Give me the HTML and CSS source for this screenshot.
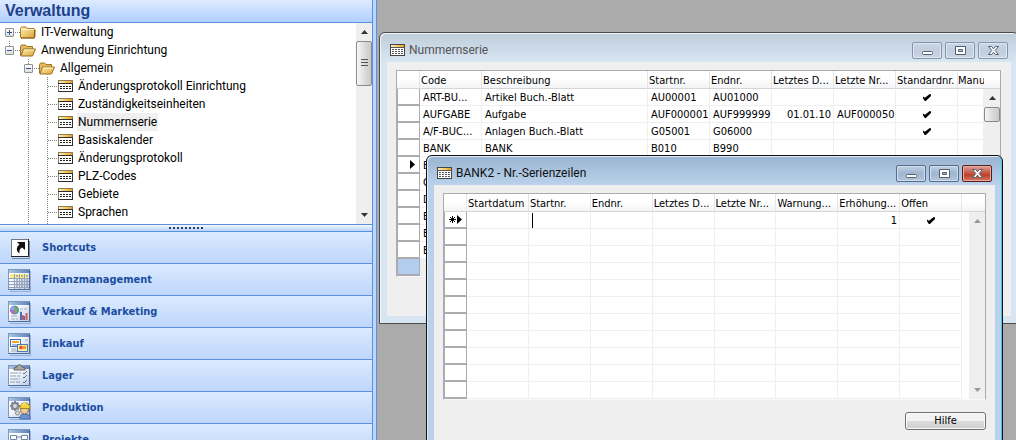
FILE: index.html
```html
<!DOCTYPE html>
<html lang="de">
<head>
<meta charset="utf-8">
<title>Verwaltung</title>
<link rel="stylesheet" href="styles.css">
</head>
<body>
<svg class="defs" aria-hidden="true">
  <defs>
    <linearGradient id="gFolder" x1="0" y1="0" x2="1" y2="1"><stop offset="0" stop-color="#fff0b0"/><stop offset="1" stop-color="#dca234"/></linearGradient>
    <linearGradient id="gOrange" x1="0" y1="0" x2="1" y2="0"><stop offset="0" stop-color="#fff0b8"/><stop offset="1" stop-color="#eda31f"/></linearGradient>
    <linearGradient id="gSheet" x1="0" y1="0" x2="1" y2="1"><stop offset="0.3" stop-color="#ffffff"/><stop offset="1" stop-color="#bccbe6"/></linearGradient>
    <linearGradient id="gCap" x1="0" y1="0" x2="1" y2="0"><stop offset="0" stop-color="#a9c4ea"/><stop offset="1" stop-color="#5f83bd"/></linearGradient>
    <symbol id="folder" viewBox="0 0 16 13"><path d="M.5 11V2.500L1.500 1h4.500l1.500 1.500h6.500l1 1V11l-1 1h-13z" fill="url(#gFolder)" stroke="#a87b28"/><path d="M1.500 3.500h12" stroke="#fff6cc"/><path d="M1 12h13.500V4" fill="none" stroke="#80601e"/></symbol>
    <symbol id="open" viewBox="0 0 16 13"><path d="M.5 11.500v-9L1.500 1h4L7 2.500h5.500v3" fill="#e5b95c" stroke="#a07526"/><path d="M3.500 5h12L12.500 12H1z" fill="url(#gFolder)" stroke="#94702a"/><path d="M4 6h10" stroke="#fff3bd"/></symbol>
    <symbol id="form" viewBox="0 0 15 12"><rect x=".5" y=".5" width="14" height="11" fill="#fff" stroke="#8a7d58"/><rect x="1" y="1" width="13" height="2" fill="url(#gOrange)"/><path d="M0 3.500h15M14.500 3v9M0 11.500h15" stroke="#303030"/><path d="M2 6.500h2m1 0h2m1 0h2m1 0h2M2 8.500h2m1 0h2m1 0h2m1 0h2" stroke="#222"/></symbol>
    <symbol id="formw" viewBox="0 0 15 12"><rect x=".5" y=".5" width="14" height="11" fill="#fff" stroke="#444"/><rect x="1" y="1" width="13" height="2" fill="url(#gOrange)"/><path d="M0 3.500h15" stroke="#555"/><path d="M2 5.500h2m1 0h2m1 0h2m1 0h2M2 7.500h2m1 0h2m1 0h2m1 0h2M2 9.500h2m1 0h2m1 0h2m1 0h2" stroke="#555"/></symbol>
    <symbol id="sheet" viewBox="0 0 24 24"><path d="M2 23.500h20.500V3" fill="none" stroke="#7d93b8" opacity=".6"/><rect x=".5" y="1.500" width="21" height="20" fill="url(#gSheet)" stroke="#8397b5"/><rect x="1" y="2" width="20" height="3" fill="url(#gCap)"/><path d="M21.500 2v19.500H1" fill="none" stroke="#526a91"/></symbol>
    <symbol id="shortcut" viewBox="0 0 24 24"><path d="M4 22.500h17.500V5" fill="none" stroke="#7888a5"/><rect x="3.500" y="3.500" width="17" height="17" fill="#fff" stroke="#777"/><path d="M20.500 3v17.500H3" fill="none" stroke="#222"/><path d="M9 6h8v8l-3-2.500c-2 1-3 3-2.500 6C8 15 8 11 11.500 8.500z" fill="#111"/></symbol>
    <symbol id="finance" viewBox="0 0 24 24"><use href="#sheet"/><rect x="2" y="6" width="18" height="4" fill="#f7eb8b"/><path d="M1 10.500h20M1 13.500h20M1 16.500h20M1 19.500h20M6.500 6v15M11.500 6v15M16.500 6v15" stroke="#93a3bd"/><path d="M8 8h2m3 0h2m3 0h2M8 12h2m3 0h2m3 0h2M8 15h2m3 0h2m3 0h2M8 18h2m3 0h2m3 0h2" stroke="#727b8b"/></symbol>
    <symbol id="sales" viewBox="0 0 24 24"><use href="#sheet"/><circle cx="6.500" cy="10" r="4" fill="#65b966" stroke="#5b72a4"/><path d="M6.500 10V6a4 4 0 0 0-4 4z" fill="#8fa0ee"/><path d="M6.500 10H2.500a4 4 0 0 0 4 4z" fill="#c261c4"/><path d="M12 9h3m1 0h3M12 12h2M3 16h6M3 19h4m1 0h2" stroke="#a1adbf"/><path d="M13 20v-8m3 8v-4" stroke="#3f6fce" stroke-width="2"/><path d="M14.500 20v-5m4 5v-7" stroke="#dc5948" stroke-width="2"/></symbol>
    <symbol id="purchase" viewBox="0 0 24 24"><use href="#sheet"/><path d="M3 17h5M3 19h6m8-11h3" stroke="#a1adbf"/><rect x="2.500" y="7.500" width="10" height="7" fill="#fff" stroke="#3f70be"/><path d="M4 10h7" stroke="#f2a528" stroke-width="2"/><path d="M4 13h7" stroke="#4b78c4"/><rect x="9.500" y="12.500" width="10" height="7" fill="#fff4b5" stroke="#547ab4"/><circle cx="13" cy="15.500" r="2" fill="#e85c2b"/><circle cx="16.500" cy="15.500" r="2" fill="#f4a32b"/></symbol>
    <symbol id="stock" viewBox="0 0 24 24"><use href="#sheet"/><path d="M6 6V4l3-1c0-3 5-3 5 0l3 1v2z" fill="#aaa7a0" stroke="#69665f"/><path d="M2 9h8m1 0h2M2 12h6m1 0h3M2 15h8m1 0h1M2 18h5m1 0h4" stroke="#8a99b1"/><path d="M15 9l1 1 3-3M15 13l1 1 3-3M15 18l1 1 3-3" fill="none" stroke="#5e708e"/></symbol>
    <symbol id="production" viewBox="0 0 24 24"><use href="#sheet"/><circle cx="7" cy="10" r="3" fill="#d7dbe0" stroke="#7f8791" stroke-width="2"/><path d="M7 5v2m0 6v2M2 10h2m6 0h2M3.500 6.500L5 8m4 4l1.500 1.500M10.500 6.500L9 8m-4 4l-1.500 1.500" stroke="#7f8791" stroke-width="2"/><circle cx="9.500" cy="17" r="2" fill="#ddd" stroke="#888"/><path d="M12 23c-1-4 2-5 5-5s6 2 5 5z" fill="#6f91ce" stroke="#4b6ca7"/><circle cx="16.500" cy="14" r="4" fill="#edcda1" stroke="#94714b"/><path d="M12 12.500c-1-7 10-8 10 0z" fill="#f5d33d" stroke="#a58523"/><path d="M14 9c1-2 3-2 4-1" fill="none" stroke="#fff7b5"/></symbol>
    <symbol id="projects" viewBox="0 0 24 24"><use href="#sheet"/><path d="M5 11v7h7M9 9h4M14 11v4M14 18h3" stroke="#7689a6" fill="none"/><path d="M2.500 7.500h6v4h-6zM13.500 7.500h6v4h-6zM10.500 15.500h7v4h-7z" fill="#fff" stroke="#7185a5"/></symbol>
    <symbol id="min" viewBox="0 0 13 13"><rect x="1.500" y="7.500" width="10" height="3" rx="1" fill="#fff" stroke="#555e6c"/></symbol>
    <symbol id="max" viewBox="0 0 13 13"><path d="M1.500 2.500h10v8h-10zM4.500 5.500v2h4v-2z" fill="#fff" stroke="#555e6c" fill-rule="evenodd"/></symbol>
    <symbol id="close" viewBox="0 0 13 13"><path d="M1.500 2.500h3l2 2.300 2-2.300h3l-3.300 4 3.300 4h-3l-2-2.300-2 2.300h-3l3.300-4z" fill="#fff" stroke="#555e6c"/></symbol>
    <symbol id="up" viewBox="0 0 7 4"><path d="M0 4l3.500-4L7 4z"/></symbol>
    <symbol id="down" viewBox="0 0 7 4"><path d="M0 0h7L3.500 4z"/></symbol>
    <symbol id="current" viewBox="0 0 5 9"><path d="M0 0l5 4.500L0 9z"/></symbol>
    <symbol id="new" viewBox="0 0 13 9"><path d="M3.500 1v7M0 4.500h7M1 2l5 5M6 2l-5 5" stroke="#000"/><path d="M8 0l5 4.500L8 9z"/></symbol>
  </defs>
</svg>

<aside class="panel">
  <h1 class="panel-title">Verwaltung</h1>
  <div class="tree-pane">
    <ul class="tree">
      <li><div class="row"><button class="toggle plus" aria-label="Öffnen"></button><svg class="folder"><use href="#folder"/></svg><a href="#">IT-Verwaltung</a></div></li>
      <li><div class="row joined"><button class="toggle" aria-label="Schließen"></button><svg class="folder"><use href="#open"/></svg><a href="#">Anwendung Einrichtung</a></div>
        <ul>
          <li><div class="row joined"><button class="toggle" aria-label="Schließen"></button><svg class="folder"><use href="#open"/></svg><a href="#">Allgemein</a></div>
            <ul class="leaves">
              <li class="row"><svg class="form"><use href="#form"/></svg><a href="#">Änderungsprotokoll Einrichtung</a></li>
              <li class="row"><svg class="form"><use href="#form"/></svg><a href="#">Zuständigkeitseinheiten</a></li>
              <li class="row"><svg class="form"><use href="#form"/></svg><a href="#" class="selected">Nummernserie</a></li>
              <li class="row"><svg class="form"><use href="#form"/></svg><a href="#">Basiskalender</a></li>
              <li class="row"><svg class="form"><use href="#form"/></svg><a href="#">Änderungsprotokoll</a></li>
              <li class="row"><svg class="form"><use href="#form"/></svg><a href="#">PLZ-Codes</a></li>
              <li class="row"><svg class="form"><use href="#form"/></svg><a href="#">Gebiete</a></li>
              <li class="row"><svg class="form"><use href="#form"/></svg><a href="#">Sprachen</a></li>
            </ul>
          </li>
        </ul>
      </li>
    </ul>
    <div class="scroll tree-scroll"><svg class="arrow"><use href="#up"/></svg><div class="thumb grip"></div><svg class="arrow end"><use href="#down"/></svg></div>
  </div>
  <div class="splitter"><span class="dots"></span></div>
  <nav class="areas">
    <button><svg><use href="#shortcut"/></svg>Shortcuts</button>
    <button><svg><use href="#finance"/></svg>Finanzmanagement</button>
    <button><svg><use href="#sales"/></svg>Verkauf &amp; Marketing</button>
    <button><svg><use href="#purchase"/></svg>Einkauf</button>
    <button><svg><use href="#stock"/></svg>Lager</button>
    <button><svg><use href="#production"/></svg>Produktion</button>
    <button><svg><use href="#projects"/></svg>Projekte</button>
  </nav>
</aside>

<main class="desktop">
  <section class="window series">
    <header class="titlebar"><svg class="form"><use href="#formw"/></svg><h2>Nummernserie</h2>
      <button aria-label="Minimieren"><svg><use href="#min"/></svg></button><button aria-label="Maximieren"><svg><use href="#max"/></svg></button><button aria-label="Fenster schließen"><svg><use href="#close"/></svg></button></header>
    <div class="content">
      <div class="grid">
        <table>
          <colgroup><col class="c-mark"><col class="c-std"><col class="c-desc"><col class="c-std"><col class="c-std"><col class="c-std"><col class="c-std"><col class="c-std"><col></colgroup>
          <thead><tr><th></th><th>Code</th><th>Beschreibung</th><th>Startnr.</th><th>Endnr.</th><th>Letztes D...</th><th>Letzte Nr...</th><th>Standardnr.</th><th class="end">Manu</th></tr></thead>
          <tbody>
            <tr><td></td><td>ART-BU...</td><td>Artikel Buch.-Blatt</td><td>AU00001</td><td>AU01000</td><td></td><td></td><td><input type="checkbox" class="check" aria-label="Standardnr." checked></td><td></td></tr>
            <tr><td></td><td>AUFGABE</td><td>Aufgabe</td><td>AUF000001</td><td>AUF999999</td><td class="num">01.01.10</td><td>AUF000050</td><td><input type="checkbox" class="check" aria-label="Standardnr." checked></td><td></td></tr>
            <tr><td></td><td>A/F-BUC...</td><td>Anlagen Buch.-Blatt</td><td>G05001</td><td>G06000</td><td></td><td></td><td><input type="checkbox" class="check" aria-label="Standardnr." checked></td><td></td></tr>
            <tr><td></td><td>BANK</td><td>BANK</td><td>B010</td><td>B990</td><td></td><td></td><td></td><td></td></tr>
            <tr><td><svg class="mark"><use href="#current"/></svg></td><td>B</td><td></td><td></td><td></td><td></td><td></td><td></td><td></td></tr>
            <tr><td></td><td>C</td><td></td><td></td><td></td><td></td><td></td><td></td><td></td></tr>
            <tr><td></td><td>D</td><td></td><td></td><td></td><td></td><td></td><td></td><td></td></tr>
            <tr><td></td><td>E</td><td></td><td></td><td></td><td></td><td></td><td></td><td></td></tr>
            <tr><td></td><td>E</td><td></td><td></td><td></td><td></td><td></td><td></td><td></td></tr>
            <tr><td></td><td>E</td><td></td><td></td><td></td><td></td><td></td><td></td><td></td></tr>
            <tr class="last"><td></td><td></td><td></td><td></td><td></td><td></td><td></td><td></td><td></td></tr>
          </tbody>
        </table>
        <div class="side"><div class="side-head"></div><div class="scroll"><svg class="arrow"><use href="#up"/></svg><div class="thumb"></div><svg class="arrow end"><use href="#down"/></svg></div></div>
      </div>
    </div>
  </section>

  <section class="window lines active">
    <header class="titlebar"><svg class="form"><use href="#formw"/></svg><h2>BANK2 - Nr.-Serienzeilen</h2>
      <button aria-label="Minimieren"><svg><use href="#min"/></svg></button><button aria-label="Maximieren"><svg><use href="#max"/></svg></button><button class="close" aria-label="Fenster schließen"><svg><use href="#close"/></svg></button></header>
    <div class="content">
      <div class="grid">
        <table>
          <colgroup><col class="c-mark"><col><col><col><col><col><col><col><col></colgroup>
          <thead><tr><th></th><th>Startdatum</th><th>Startnr.</th><th>Endnr.</th><th>Letztes D...</th><th>Letzte Nr...</th><th>Warnung...</th><th>Erhöhung...</th><th>Offen</th></tr></thead>
          <tbody>
            <tr><td><svg class="mark new"><use href="#new"/></svg></td><td></td><td><input type="text" class="edit" aria-label="Startnr."></td><td></td><td></td><td></td><td></td><td class="num">1</td><td><input type="checkbox" class="check" aria-label="Offen" checked></td></tr>
            <tr><td></td><td></td><td></td><td></td><td></td><td></td><td></td><td></td><td></td></tr>
            <tr><td></td><td></td><td></td><td></td><td></td><td></td><td></td><td></td><td></td></tr>
            <tr><td></td><td></td><td></td><td></td><td></td><td></td><td></td><td></td><td></td></tr>
            <tr><td></td><td></td><td></td><td></td><td></td><td></td><td></td><td></td><td></td></tr>
            <tr><td></td><td></td><td></td><td></td><td></td><td></td><td></td><td></td><td></td></tr>
            <tr><td></td><td></td><td></td><td></td><td></td><td></td><td></td><td></td><td></td></tr>
            <tr><td></td><td></td><td></td><td></td><td></td><td></td><td></td><td></td><td></td></tr>
            <tr><td></td><td></td><td></td><td></td><td></td><td></td><td></td><td></td><td></td></tr>
            <tr><td></td><td></td><td></td><td></td><td></td><td></td><td></td><td></td><td></td></tr>
            <tr><td></td><td></td><td></td><td></td><td></td><td></td><td></td><td></td><td></td></tr>
          </tbody>
        </table>
        <div class="side wide"><div class="side-head"></div><div class="scroll faded"><svg class="arrow"><use href="#up"/></svg><svg class="arrow end"><use href="#down"/></svg></div></div>
      </div>
      <button class="help">Hilfe</button>
    </div>
  </section>
</main>
</body>
</html>
```

FILE: styles.css
```css
* { box-sizing: border-box; }
body {
  margin: 0;
  height: 100vh;
  display: flex;
  overflow: hidden;
  background: #ababab;
  color: #000;
  font: 11px/16px "DejaVu Sans Condensed", "DejaVu Sans", sans-serif;
}
.defs { position: absolute; width: 0; height: 0; }
svg { display: block; flex: none; }
button { font: inherit; padding: 0; margin: 0; }
ul { list-style: none; margin: 0; padding: 0; }

/* Navigation panel */
.panel {
  flex: none;
  width: 377px;
  display: flex;
  flex-direction: column;
  border-right: 1px solid #5d8fdb;
  background: #bcd7fd;
  padding-right: 3px;
}
.panel > * { border-right: 1px solid #5d8fdb; }
.panel-title {
  margin: 0;
  padding: 0 5px;
  border-bottom: 1px solid #5d8fdb;
  background: linear-gradient(#deebff, #b0d0ff);
  color: #1e4188;
  font: bold 16px/22px "Liberation Sans", Arial, sans-serif;
}
.tree-pane { display: flex; background: #fff; border-bottom: 1px solid #5d8fdb; }
.tree { flex: 1; padding-left: 5px; font: 12px/18px Roboto, "Open Sans", sans-serif; }
.tree ul { padding-left: 19px; }
.tree a { color: #000; text-decoration: none; padding: 0 1px; margin-left: 4px; }
.tree a.selected { background: #efefef; }
.row { display: flex; align-items: center; height: 18px; }
.toggle {
  flex: none;
  width: 9px;
  height: 9px;
  margin-right: 6px;
  border: 1px solid #919191;
  border-radius: 1px;
  background: linear-gradient(#34519c, #34519c) center / 5px 1px no-repeat, linear-gradient(#fff, #ddd);
}
.toggle.plus {
  background: linear-gradient(#34519c, #34519c) center / 5px 1px no-repeat, linear-gradient(#34519c, #34519c) center / 1px 5px no-repeat, linear-gradient(#fff, #ddd);
}
.tree div.row { background: repeating-linear-gradient(90deg, #808080 0 1px, transparent 1px 2px) 10px 9px / 6px 1px no-repeat; }
.tree div.row.joined {
  background: repeating-linear-gradient(90deg, #808080 0 1px, transparent 1px 2px) 10px 9px / 6px 1px no-repeat,
    repeating-linear-gradient(#808080 0 1px, transparent 1px 2px) 4px 0 / 1px 5px no-repeat;
}
.folder { width: 16px; height: 13px; }
.form { width: 15px; height: 12px; }
.tree .leaves {
  padding: 0 0 3px 19px;
  background: repeating-linear-gradient(#808080 0 1px, transparent 1px 2px) 4px 0 / 1px 100% no-repeat,
    repeating-linear-gradient(#808080 0 1px, transparent 1px 2px) 23px 0 / 1px 100% no-repeat;
}
.leaves .row {
  padding-left: 15px;
  background: repeating-linear-gradient(90deg, #808080 0 1px, transparent 1px 2px) 5px 9px / 9px 1px no-repeat;
}

/* Scrollbars */
.scroll {
  display: flex;
  flex-direction: column;
  align-items: center;
  flex: 1;
  background: #efefef;
}
.tree-scroll { flex: none; width: 16px; }
.arrow { width: 7px; height: 4px; margin: 7px 0; fill: #333; }
.arrow.end { margin-top: auto; }
.faded .arrow { fill: #999; }
.thumb {
  width: 16px;
  height: 15px;
  border: 1px solid #8b8b8b;
  border-radius: 2px;
  background: linear-gradient(90deg, #f5f5f5, #dcdcdc 50%, #c9c9c9);
}
.thumb.grip {
  height: 45px;
  background: repeating-linear-gradient(#555 0 1px, transparent 1px 3px) center / 7px 9px no-repeat, linear-gradient(90deg, #f7f7f7, #dedede 50%, #c8c8c8);
}

.splitter { height: 7px; border-bottom: 1px solid #5d8fdb; background: linear-gradient(#f2f8ff, #b4d5fb); }
.dots {
  display: block;
  width: 35px;
  height: 6px;
  margin: 0 auto;
  background: repeating-linear-gradient(90deg, #27405f 0 2px, transparent 2px 4px) center / 35px 2px no-repeat;
}
.areas { flex: 1; min-height: 0; overflow: hidden; }
.areas button {
  display: flex;
  align-items: center;
  gap: 10px;
  width: 100%;
  height: 32px;
  padding: 1px 0 0 8px;
  border: 0;
  border-bottom: 1px solid #5d8fdb;
  background: linear-gradient(#dcebff, #bdd6fb);
  color: #1c4da0;
  font-weight: bold;
}
.areas svg { width: 24px; height: 24px; }

/* Document windows on the free desktop */
.desktop { position: relative; flex: 1; overflow: hidden; }
.window {
  position: absolute;
  padding: 0 7px 7px;
  border: 1px solid #4b4b4b;
  border-radius: 6px 6px 0 0;
  background: linear-gradient(#bfcddb, #d7e4f2 28px);
  box-shadow: inset 1px 1px #f0f6fc;
}
.series { left: 2px; right: -3px; top: 32px; }
.lines { left: 49px; right: 13px; top: 155px; }
.window.active {
  border-color: #111;
  background: linear-gradient(#99b4d1, #b9d1ea 28px);
  box-shadow: inset 1px 1px #e2effb, inset -1px 0 #45c4ec;
}
.titlebar { display: flex; align-items: center; gap: 3px; height: 29px; padding: 5px 3px 0; }
.titlebar h2 { flex: 1; margin: 0; padding-left: 1px; font: 12px/18px Roboto, "Open Sans", sans-serif; color: #555; }
.active h2 { color: #111; }
.titlebar button {
  display: grid;
  place-items: center;
  width: 30px;
  height: 17px;
  border: 1px solid #8592aa;
  border-radius: 2px;
  background: linear-gradient(#cbd8e6, #bfcddd 50%, #c8d6e5);
  box-shadow: inset 0 0 0 1px #dde7f2;
}
.titlebar button svg { width: 13px; height: 13px; }
.active .titlebar button { border-color: #596b86; background: linear-gradient(#c0d1e4, #9fb6cf 50%, #afc6de); box-shadow: inset 0 0 0 1px #d1dfed; }
.active .titlebar .close { border-color: #5b1a1a; background: linear-gradient(#dfa096, #c2513f 50%, #ba4029 60%, #d37b66); box-shadow: inset 0 0 0 1px #e5ada4; }
.content { background: #efefef; padding: 8px 10px 39px 9px; }
.active .content { padding: 8px 9px 10px; }

/* Data grids */
.grid { display: flex; border: 1px solid #ababb0; border-bottom-color: #f8f8f8; background: #fff; }
table { flex: 1; width: 0; table-layout: fixed; border-collapse: separate; border-spacing: 0; }
.c-mark { width: 23px; }
.c-std { width: 62px; }
.c-desc { width: 166px; }
th, td { overflow: hidden; white-space: nowrap; text-align: left; font-weight: normal; }
th {
  height: 18px;
  padding: 3px 0 0 1px;
  line-height: 14px;
  border-right: 1px solid #e3e5e8;
  border-bottom: 1px solid #d5d5d5;
  background: linear-gradient(#fff 45%, #f3f4f6);
}
th.end { border-right: 0; padding-left: 0; }
td { height: 17px; padding: 1px 2px 0 3px; line-height: 15px; border-right: 1px solid #efefef; border-bottom: 1px solid #efefef; }
td:first-child { padding: 0; border: 1px solid #ababb0; border-width: 0 1px 2px; }
.last td:first-child { background: #b3cdef; }
.last td { background: #efefef; }
.num { text-align: right; }
.mark { width: 5px; height: 9px; margin-left: 12px; }
.mark.new { width: 13px; margin-left: 4px; }
.check {
  appearance: none;
  display: block;
  width: 8px;
  height: 7px;
  margin: 0 auto;
  background: #000;
  clip-path: polygon(0 36%, 24% 52%, 84% 0, 100% 8%, 100% 30%, 36% 100%, 22% 100%, 0 62%);
}
.edit {
  display: block;
  width: 100%;
  height: 15px;
  padding: 0;
  border: 0;
  outline: 0;
  font: inherit;
  background: linear-gradient(#000, #000) left / 1px 15px no-repeat;
}
.side { display: flex; flex-direction: column; width: 16px; }
.side.wide { width: 23px; }
.side.wide .scroll { margin-left: 7px; }
.side-head { height: 18px; border-bottom: 1px solid #d5d5d5; background: linear-gradient(#fff 45%, #f3f4f6); }
.help {
  display: block;
  width: 81px;
  height: 18px;
  margin: 12px 0 0 auto;
  border: 1px solid #707070;
  border-radius: 3px;
  background: linear-gradient(#f2f2f2 0 50%, #dcdcdc 50%, #cfcfcf);
  box-shadow: inset 0 0 0 1px #fafafa;
}
```
